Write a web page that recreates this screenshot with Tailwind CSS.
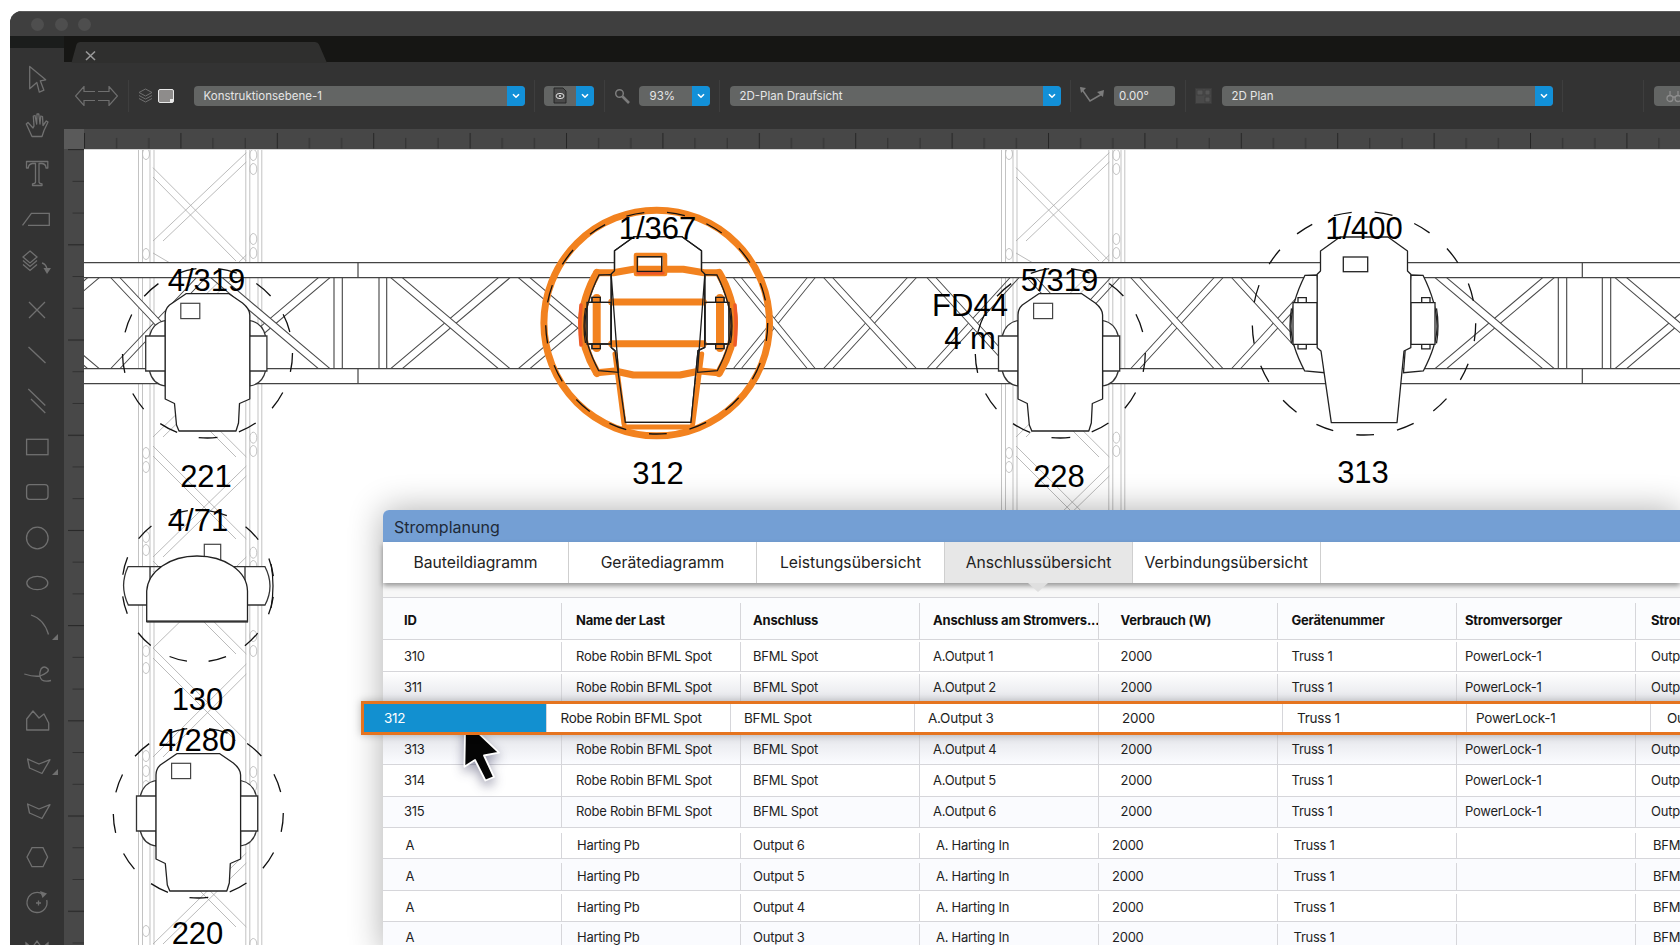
<!DOCTYPE html>
<html lang="de">
<head>
<meta charset="utf-8">
<title>Stromplanung</title>
<script src="https://cdn.jsdelivr.net/npm/@tailwindcss/browser@4"></script>
</head>
<body class="relative w-[1680px] h-[945px] overflow-hidden bg-white font-['Inter','Liberation_Sans',sans-serif]">
<div class="h-full pl-[10px] pt-[11px]">
<div class="h-full flex flex-col overflow-hidden rounded-tl-[12px] bg-[#333333]">

  <!-- title bar -->
  <div class="h-[25px] shrink-0 bg-[#3f3f3f] border-t border-[#5a5a5a] flex items-center pl-[21px] gap-[10.7px]">
    <span class="w-[13px] h-[13px] rounded-full bg-[#4e4e4e]"></span>
    <span class="w-[13px] h-[13px] rounded-full bg-[#4e4e4e]"></span>
    <span class="w-[13px] h-[13px] rounded-full bg-[#4e4e4e]"></span>
  </div>

  <div class="flex-1 min-h-0 flex">
    <!-- tool sidebar -->
    <aside class="w-[54px] shrink-0 flex flex-col bg-[#333333]">
      <div class="h-[12px] shrink-0 bg-[#1b1d1c]"></div>
      <div class="pt-[11px] flex flex-col text-[#707070]">
        <div class="h-[45.6px] flex items-center justify-center"><svg class="w-[30px] h-[30px] overflow-visible -translate-y-[3.5px]" viewBox="0 0 30 30" fill="none" stroke="currentColor" stroke-width="1.3" stroke-linejoin="round"><path d="M7.7 3V25.3L14.8 19L17.3 28.7L21.9 26.7L18.3 17.3L23.7 16.3Z"/></svg></div>
        <div class="h-[45.6px] flex items-center justify-center"><svg class="w-[30px] h-[30px] overflow-visible -translate-y-[2px]" viewBox="0 0 30 30" fill="none" stroke="currentColor" stroke-width="1.3" stroke-linejoin="round"><path d="M10 26.5H20L22 20.5L26 12L24.3 11L21 15.5L20.5 6.5L18.8 6L18 14L16.8 4H15L14.7 14L13 5.5L11.3 6L12 16L11 18L6 12.5L4.3 14L10 26.5Z"/></svg></div>
        <div class="h-[45.6px] flex items-center justify-center"><svg class="w-[30px] h-[30px] overflow-visible" viewBox="0 0 30 30" fill="none" stroke="currentColor" stroke-width="1.3" stroke-linejoin="round"><path d="M4.5 3.5H25.8V10H24Q24 6 20 5.5H17V24Q17 25.5 20 25.8V27.5H10.5V25.8Q13.5 25.5 13.5 24V5.5H10.5Q6.5 6 6.3 10H4.5Z"/></svg></div>
        <div class="h-[45.6px] flex items-center justify-center"><svg class="w-[30px] h-[30px] overflow-visible" viewBox="0 0 30 30" fill="none" stroke="currentColor" stroke-width="1.3"><path d="M0.5 21.4L9.4 9.4H27.3V21.4H6"/></svg></div>
        <div class="h-[45.6px] flex items-center justify-center"><svg class="w-[30px] h-[30px] overflow-visible" viewBox="0 0 30 30" fill="none" stroke="currentColor" stroke-width="1.3"><path d="M8 2L15 8L8 14L1 8ZM1 11.5L8 17.5L15 11.5M1 15.5L8 21.5L15 15.5M20 14Q24 15 25 20"/><path d="M21.5 19H29L25 25Z" fill="currentColor" stroke="none"/></svg></div>
        <div class="h-[45.6px] flex items-center justify-center"><svg class="w-[30px] h-[30px] overflow-visible" viewBox="0 0 30 30" fill="none" stroke="currentColor" stroke-width="1.3"><path d="M7 7L23 23M23 7L7 23"/></svg></div>
        <div class="h-[45.6px] flex items-center justify-center"><svg class="w-[30px] h-[30px] overflow-visible" viewBox="0 0 30 30" fill="none" stroke="currentColor" stroke-width="1.3"><path d="M6.5 7L23.5 23"/></svg></div>
        <div class="h-[45.6px] flex items-center justify-center"><svg class="w-[30px] h-[30px] overflow-visible" viewBox="0 0 30 30" fill="none" stroke="currentColor" stroke-width="1.3"><path d="M6.3 3L23.3 19.5M9 13L23.3 27"/></svg></div>
        <div class="h-[45.6px] flex items-center justify-center"><svg class="w-[30px] h-[30px] overflow-visible" viewBox="0 0 30 30" fill="none" stroke="currentColor" stroke-width="1.3"><rect x="4.6" y="7.3" width="21.4" height="15.4"/></svg></div>
        <div class="h-[45.6px] flex items-center justify-center"><svg class="w-[30px] h-[30px] overflow-visible" viewBox="0 0 30 30" fill="none" stroke="currentColor" stroke-width="1.3"><rect x="4.6" y="7.7" width="21.4" height="14.6" rx="3"/></svg></div>
        <div class="h-[45.6px] flex items-center justify-center"><svg class="w-[30px] h-[30px] overflow-visible" viewBox="0 0 30 30" fill="none" stroke="currentColor" stroke-width="1.3"><circle cx="15.3" cy="15" r="10.8"/></svg></div>
        <div class="h-[45.6px] flex items-center justify-center"><svg class="w-[30px] h-[30px] overflow-visible" viewBox="0 0 30 30" fill="none" stroke="currentColor" stroke-width="1.3"><ellipse cx="15.3" cy="15" rx="10.5" ry="6.7"/></svg></div>
        <div class="h-[45.6px] flex items-center justify-center"><svg class="w-[30px] h-[30px] overflow-visible" viewBox="0 0 30 30" fill="none" stroke="currentColor" stroke-width="1.3"><path d="M9 1Q22 5 26.5 20.5"/><path d="M36 20V26H30Z" fill="currentColor" stroke="none"/></svg></div>
        <div class="h-[45.6px] flex items-center justify-center"><svg class="w-[30px] h-[30px] overflow-visible" viewBox="0 0 30 30" fill="none" stroke="currentColor" stroke-width="1.3"><path d="M2.3 14Q12 17 18 16Q28 12 26 9Q22 5 19 9Q16 16 20 20Q23 22 29 20.5"/></svg></div>
        <div class="h-[45.6px] flex items-center justify-center"><svg class="w-[30px] h-[30px] overflow-visible" viewBox="0 0 30 30" fill="none" stroke="currentColor" stroke-width="1.3" stroke-linejoin="round"><path d="M4.7 25V14L11 6L17 13L22 9L26.7 18V25Z"/></svg></div>
        <div class="h-[45.6px] flex items-center justify-center"><svg class="w-[30px] h-[30px] overflow-visible" viewBox="0 0 30 30" fill="none" stroke="currentColor" stroke-width="1.3" stroke-linejoin="round"><path d="M5.6 8L17 13L28 8.7L20 22.5L7.5 17Z"/><path d="M36 18V24H30Z" fill="currentColor" stroke="none"/></svg></div>
        <div class="h-[45.6px] flex items-center justify-center"><svg class="w-[30px] h-[30px] overflow-visible" viewBox="0 0 30 30" fill="none" stroke="currentColor" stroke-width="1.3" stroke-linejoin="round"><path d="M5.6 8L17 13L28 8.7L20 22.5L7.5 17Z"/></svg></div>
        <div class="h-[45.6px] flex items-center justify-center"><svg class="w-[30px] h-[30px] overflow-visible" viewBox="0 0 30 30" fill="none" stroke="currentColor" stroke-width="1.3"><path d="M5 15L10 5.7H21L25.6 15L21 24.7H10Z"/></svg></div>
        <div class="h-[45.6px] flex items-center justify-center"><svg class="w-[30px] h-[30px] overflow-visible" viewBox="0 0 30 30" fill="none" stroke="currentColor" stroke-width="1.3"><path d="M21 7.5A10 10 0 1 0 24.7 13M14 16H19M16.5 13.5V18.5"/><path d="M18 4L25 6.5L20.5 11Z" fill="currentColor" stroke="none"/></svg></div>
        <div class="h-[45.6px] flex items-center justify-center"><svg class="w-[30px] h-[30px] overflow-visible" viewBox="0 0 30 30" fill="none" stroke="currentColor" stroke-width="1.3"><path d="M4 22V10L10 15L15 8L20 15L26 10V22"/></svg></div>
      </div>
    </aside>

    <div class="flex-1 min-w-0 flex flex-col">
      <!-- tab strip -->
      <div class="relative h-[26.3px] shrink-0 bg-[#161614]">
        <svg class="absolute left-0 top-0 w-[300px] h-[27px]" viewBox="64 36 300 27"><path d="M71.4 63L76.5 44.5Q77.3 42 80 42H315Q318 42 319 44.5L327 63Z" fill="#2f2f2e"/><path d="M86 51.5L95 60M95 51.5L86 60" stroke="#9a9a9a" stroke-width="1.6" fill="none"/></svg>
      </div>

      <!-- toolbar -->
      <div class="h-[67px] shrink-0 bg-[#333333] flex items-center text-[11.5px] text-[#e6e6e6]">
        <svg class="ml-[11px] w-[43px] h-[20px] shrink-0" viewBox="0 0 43 20" fill="none" stroke="#6f6f6f" stroke-width="1.2"><path d="M20 5.5H9V.5L.5 10L9 19.5V14.5H20M23 5.5H34V.5L42.5 10L34 19.5V14.5H23"/></svg>
        <span class="ml-[9.5px] w-px h-[32px] bg-[#3e3e3e] shrink-0"></span>
        <svg class="ml-[9px] w-[15px] h-[16px] shrink-0" viewBox="0 0 15 16" fill="none" stroke="#6f6f6f" stroke-width="1"><path d="M7.5 1L14 4.5L7.5 8L1 4.5ZM1 7.5L7.5 11L14 7.5M1 10.5L7.5 14L14 10.5"/></svg>
        <span class="ml-[5.5px] relative w-[15.5px] h-[14.5px] shrink-0 rounded-[2px] bg-[#8e8c8b] border border-[#e8e8e8]"><span class="absolute right-0 bottom-0 w-[3px] h-[3px] bg-[#e8e8e8]"></span></span>
        <div class="ml-[20px] w-[331px] h-[20px] shrink-0 flex rounded-[4px] overflow-hidden bg-[#636564]">
          <span class="flex-1 pl-[10px] leading-[20px]">Konstruktionsebene-1</span>
          <span class="w-[18px] bg-[#1290d8] flex items-center justify-center"><svg class="w-[8px] h-[6px]" viewBox="0 0 8 6" fill="none" stroke="#fff" stroke-width="1.6"><path d="M1 1.2L4 4.2L7 1.2"/></svg></span>
        </div>
        <span class="ml-[9px] w-px h-[32px] bg-[#3e3e3e] shrink-0"></span>
        <div class="ml-[9.5px] w-[50px] h-[20px] shrink-0 flex rounded-[4px] overflow-hidden bg-[#636564]">
          <span class="flex-1 flex items-center justify-center"><svg class="w-[16px] h-[17px]" viewBox="0 0 16 17" fill="none" stroke="#222" stroke-width=".9"><path d="M2 1H11L14 4V16H2Z" fill="#4a4a4a"/><ellipse cx="8" cy="9" rx="4" ry="2.6" stroke="#eee"/><circle cx="8" cy="9" r="1" fill="#eee" stroke="none"/></svg></span>
          <span class="w-[18px] bg-[#1290d8] flex items-center justify-center"><svg class="w-[8px] h-[6px]" viewBox="0 0 8 6" fill="none" stroke="#fff" stroke-width="1.6"><path d="M1 1.2L4 4.2L7 1.2"/></svg></span>
        </div>
        <span class="ml-[10px] w-px h-[32px] bg-[#3e3e3e] shrink-0"></span>
        <svg class="ml-[8.5px] w-[16px] h-[16px] shrink-0" viewBox="0 0 16 16" fill="none" stroke="#7c7c7c"><circle cx="5.5" cy="5.5" r="3.8" stroke-width="1.5"/><path d="M8.5 8.5L15 15" stroke-width="2.6"/></svg>
        <div class="ml-[9px] w-[71px] h-[20px] shrink-0 flex rounded-[4px] overflow-hidden bg-[#636564]">
          <span class="flex-1 pl-[11px] leading-[20px]">93%</span>
          <span class="w-[18px] bg-[#1290d8] flex items-center justify-center"><svg class="w-[8px] h-[6px]" viewBox="0 0 8 6" fill="none" stroke="#fff" stroke-width="1.6"><path d="M1 1.2L4 4.2L7 1.2"/></svg></span>
        </div>
        <span class="ml-[9px] w-px h-[32px] bg-[#3e3e3e] shrink-0"></span>
        <div class="ml-[10px] w-[331px] h-[20px] shrink-0 flex rounded-[4px] overflow-hidden bg-[#636564]">
          <span class="flex-1 pl-[10px] leading-[20px]">2D-Plan Draufsicht</span>
          <span class="w-[18px] bg-[#1290d8] flex items-center justify-center"><svg class="w-[8px] h-[6px]" viewBox="0 0 8 6" fill="none" stroke="#fff" stroke-width="1.6"><path d="M1 1.2L4 4.2L7 1.2"/></svg></span>
        </div>
        <span class="ml-[9.5px] w-px h-[32px] bg-[#3e3e3e] shrink-0"></span>
        <svg class="ml-[9px] w-[24px] h-[17px] shrink-0" viewBox="0 0 24 17" fill="none" stroke="#7c7c7c" stroke-width="1.5"><path d="M1 1L10 14L22 7"/><path d="M0 0L6 1L1 6ZM24 3L23 10L17 5Z" fill="#7c7c7c" stroke="none"/></svg>
        <div class="ml-[10px] w-[61px] h-[20px] shrink-0 rounded-[3px] bg-[#636564] pl-[5px] leading-[20px]">0.00°</div>
        <span class="ml-[9.5px] w-px h-[32px] bg-[#3e3e3e] shrink-0"></span>
        <svg class="ml-[9px] w-[17px] h-[16px] shrink-0" viewBox="0 0 17 16" fill="#4a4a4a" stroke="#3c3c3c" stroke-width=".8"><rect x=".5" y=".5" width="16" height="15"/><rect x="2" y="2" width="6" height="5" fill="#555"/><rect x="10" y="2" width="5" height="5" fill="#555"/><rect x="10" y="9" width="5" height="5" fill="#555"/></svg>
        <div class="ml-[10px] w-[331px] h-[20px] shrink-0 flex rounded-[4px] overflow-hidden bg-[#636564]">
          <span class="flex-1 pl-[10px] leading-[20px]">2D Plan</span>
          <span class="w-[18px] bg-[#1290d8] flex items-center justify-center"><svg class="w-[8px] h-[6px]" viewBox="0 0 8 6" fill="none" stroke="#fff" stroke-width="1.6"><path d="M1 1.2L4 4.2L7 1.2"/></svg></span>
        </div>
        <span class="ml-[9.5px] w-px h-[32px] bg-[#3e3e3e] shrink-0"></span>
        <span class="ml-[80px] w-px h-[32px] bg-[#3e3e3e] shrink-0"></span>
        <div class="ml-[9.5px] w-[60px] h-[20px] shrink-0 rounded-l-[4px] bg-[#636564] pl-[12px] flex items-center"><svg class="w-[16px] h-[14px]" viewBox="0 0 16 14" fill="none" stroke="#8d8d8d" stroke-width="1.3"><circle cx="4" cy="9.5" r="3"/><circle cx="12" cy="9.5" r="3"/><path d="M4 6V2M12 6V2M7 8H9"/></svg></div>
      </div>

      <!-- top ruler -->
      <div class="h-[19.7px] shrink-0 flex bg-[#474747]">
        <div class="w-[20px] shrink-0 bg-[#5a5a5a]"></div>
        <svg class="flex-1 h-full" viewBox="84 0 1596 20" preserveAspectRatio="none">
          <defs><pattern id="rt" patternUnits="userSpaceOnUse" x="180.4" y="0" width="96.4" height="20"><path d="M.5 4V20" stroke="#262626" stroke-width="1.1"/><path d="M32.6 9V20M64.8 9V20" stroke="#2c2c2c" stroke-width=".9"/></pattern></defs>
          <rect x="84" y="0" width="1596" height="20" fill="url(#rt)"/>
        </svg>
      </div>

      <div class="flex-1 min-h-0 flex">
        <!-- left ruler -->
        <svg class="w-[20px] h-full shrink-0 bg-[#484848]" viewBox="0 149 20 796" preserveAspectRatio="none">
          <defs><pattern id="rl" patternUnits="userSpaceOnUse" x="0" y="244.3" width="20" height="95.2"><path d="M4 .5H20" stroke="#262626" stroke-width="1.2"/><path d="M8.5 32.2H20M8.5 64H20" stroke="#2c2c2c" stroke-width=".9"/></pattern></defs>
          <rect x="0" y="149" width="20" height="796" fill="url(#rl)"/>
        </svg>

        <!-- drawing canvas -->
        <div class="relative flex-1 min-w-0 bg-white overflow-hidden border-t border-[#d4d4d4]">
          <svg class="block w-[1596px] h-[796px]" viewBox="84 149 1596 796" fill="none" font-family="'Liberation Sans',Arial,sans-serif">
            <defs>
              <g id="vt">
                <path d="M138.5 149V945M142.5 149V945M150 149V945M154 149V945M245.8 149V945M249.8 149V945M258 149V945M261.8 149V945" stroke="#bcbcbc" stroke-width=".9"/>
                <path stroke="#aaaaaa" stroke-width=".8" d="M153 166.7L246.3 260M153 176L236 260M153 252L170 262M153 363L246.3 456M153 373L236 456M153 445L246.3 538M153 455L236 538M153 560L246.3 653M153 570L236 653M153 647L246.3 740M153 657L236 740M153 833L246.3 926M153 843L236 926M153 240L246.3 151.7M163 240L246.3 161M153 345L246.3 254M163 345L246.3 264M153 436L246.3 345M163 436L246.3 355M153 556L246.3 465M163 556L246.3 475M153 647L246.3 556M153 756L246.3 663M163 756L246.3 673M153 943L246.3 852M163 943L246.3 862"/>
                <g stroke="#bcbcbc" stroke-width=".9"><ellipse cx="146" cy="153" rx="3.5" ry="5.5"/><ellipse cx="146" cy="253" rx="3.5" ry="5.5"/><ellipse cx="146" cy="452" rx="3.5" ry="5.5"/><ellipse cx="146" cy="466" rx="3.5" ry="5.5"/><ellipse cx="146" cy="536" rx="3.5" ry="5.5"/><ellipse cx="146" cy="549" rx="3.5" ry="5.5"/><ellipse cx="146" cy="650" rx="3.5" ry="5.5"/><ellipse cx="146" cy="667" rx="3.5" ry="5.5"/><ellipse cx="146" cy="755" rx="3.5" ry="5.5"/><ellipse cx="146" cy="770" rx="3.5" ry="5.5"/><ellipse cx="146" cy="785" rx="3.5" ry="5.5"/><ellipse cx="146" cy="930" rx="3.5" ry="5.5"/><ellipse cx="253.3" cy="154" rx="3.5" ry="5.5"/><ellipse cx="253.3" cy="168" rx="3.5" ry="5.5"/><ellipse cx="253.3" cy="238" rx="3.5" ry="5.5"/><ellipse cx="253.3" cy="252" rx="3.5" ry="5.5"/><ellipse cx="253.3" cy="436.7" rx="3.5" ry="5.5"/><ellipse cx="253.3" cy="450" rx="3.5" ry="5.5"/><ellipse cx="253.3" cy="551.7" rx="3.5" ry="5.5"/><ellipse cx="253.3" cy="565" rx="3.5" ry="5.5"/><ellipse cx="253.3" cy="635" rx="3.5" ry="5.5"/><ellipse cx="253.3" cy="650" rx="3.5" ry="5.5"/><ellipse cx="253.3" cy="771" rx="3.5" ry="5.5"/><ellipse cx="253.3" cy="785" rx="3.5" ry="5.5"/><ellipse cx="253.3" cy="943" rx="3.5" ry="5.5"/></g>
              </g>
              <g id="tx">
                <path d="M0 367.7L107.7 276.7M11.6 367.7L119.3 276.7" stroke="#4a4a4a" stroke-width="1.1"/>
                <path d="M0 276.7H11.6L119.3 367.7H107.7Z" fill="#fff"/>
                <path d="M0 276.7L107.7 367.7M11.6 276.7L119.3 367.7" stroke="#4a4a4a" stroke-width="1.1"/>
              </g>
              <g id="devA">
                <circle r="85" stroke="#111" stroke-width="1.3" stroke-dasharray="19 22.08" fill="none"/>
                <path d="M-42.3 -32.5Q-55 -30 -58 -17V18Q-55 31 -42.3 33ZM42.3 -32.5Q55 -30 58 -17V18Q55 31 42.3 33Z" fill="#fff" stroke="#333" stroke-width="1.2"/>
                <path d="M-61.8 -17H-42V18H-61.8ZM42 -17H59.4V18H42Z" fill="#fff" stroke="#333" stroke-width="1.3"/>
                <path d="M-21.5 -59.3H21.5L35 -50Q42.3 -44 42.3 -38V46L32 50.5L31 70L28.5 78H-28.5L-31 72L-33 50.5L-42.3 46V-38Q-42.3 -44 -38 -48Z" fill="#fff" stroke="#222" stroke-width="1.3" stroke-linejoin="round"/>
                <rect x="-26.7" y="-49.7" width="19" height="15.3" fill="#fff" stroke="#444" stroke-width="1.2"/>
              </g>
              <g id="yokeB">
                <path d="M46.8 -48.3L59 -48C68 -30 73 -12 73 3C73 20 66 35 59.3 47.7L39.5 49.4Z"/>
                <path d="M57.7 -25.6H66V-20.6H57.7ZM57.7 21H66V25.6H57.7Z"/>
                <path d="M46.8 -20.6H71V21H46.8Z"/>
                <path d="M72.5 -15Q75.5 3 72.5 20" fill="none"/>
              </g>
              <g id="bodyB">
                <use href="#yokeB"/>
                <use href="#yokeB" transform="scale(-1 1)"/>
                <path d="M-24 -86.3H24L43.5 -72.3V-52.3L46.8 -49V24.4L40 27.7L33 99.4H-32.7L-43 27.7L-46.8 24.4V-49L-43.5 -52.3V-72.3Z" stroke-linejoin="round"/>
                <rect x="-20.7" y="-66.3" width="24.4" height="14.7"/>
              </g>
            </defs>

            <!-- vertical trusses -->
            <use href="#vt"/>
            <use href="#vt" transform="translate(863 0)"/>

            <!-- horizontal truss -->
            <rect x="84" y="261.7" width="1596" height="15" fill="#fff"/>
            <rect x="84" y="367.7" width="1596" height="15" fill="#fff"/>
            <use href="#tx" transform="translate(-20 0)"/>
            <use href="#tx" transform="translate(110.7 0) scale(.796 1)"/>
            <use href="#tx" transform="translate(210.7 0)"/>
            <use href="#tx" transform="translate(390.7 0)"/>
            <use href="#tx" transform="translate(518.3 0)"/>
            <use href="#tx" transform="translate(645 0) scale(.67 1)"/>
            <use href="#tx" transform="translate(733.3 0) scale(.687 1)"/>
            <use href="#tx" transform="translate(823.6 0) scale(.778 1)"/>
            <use href="#tx" transform="translate(927 0) scale(.771 1)"/>
            <use href="#tx" transform="translate(1027 0) scale(.777 1)"/>
            <use href="#tx" transform="translate(1130.7 0) scale(.774 1)"/>
            <use href="#tx" transform="translate(1231.6 0) scale(.774 1)"/>
            <use href="#tx" transform="translate(1435 0)"/>
            <use href="#tx" transform="translate(1615 0)"/>
            <path d="M84 261.7H1680M84 276.7H1680M84 367.7H1680M84 382.7H1680" stroke="#444" stroke-width="1.3"/>
            <path d="M358 261.7V276.7M358 367.7V382.7M1582.3 261.7V276.7M1582.3 367.7V382.7" stroke="#444" stroke-width="1.2"/>
            <path d="M334 276.7V367.7M342.3 276.7V367.7M379 276.7V367.7M386.7 276.7V367.7M1558.3 276.7V367.7M1566.7 276.7V367.7M1602.3 276.7V367.7M1610.7 276.7V367.7" stroke="#444" stroke-width="1.1"/>

            <!-- lighting devices -->
            <use href="#devA" transform="translate(207.5 352)"/>
            <use href="#devA" transform="translate(1060.3 352)"/>
            <use href="#devA" transform="translate(198.3 812)"/>

            <!-- 130 device -->
            <circle cx="198" cy="585" r="76" stroke="#111" stroke-width="1.3" stroke-dasharray="18 21.8" stroke-dashoffset="-10.9"/>
            <rect x="204.3" y="543.3" width="16.4" height="16" fill="#fff" stroke="#444" stroke-width="1.2"/>
            <path d="M165 565.7H128Q119 585 128.3 604H150V565.7ZM230 565.7H265Q275 585 265 604H245V565.7Z" fill="#fff" stroke="#333" stroke-width="1.3"/>
            <path d="M146.7 620.5V590C148 570 170 555 197 555C225 555 247 570 247.5 590V620.5Z" fill="#fff" stroke="#222" stroke-width="1.3"/>
            <path d="M146.7 620.5H248" stroke="#333" stroke-width="2"/>
            <path d="M271 563Q275 585 271 607" stroke="#111" stroke-width="1.2"/>

            <!-- 313 device -->
            <circle cx="1364" cy="322.3" r="111.7" stroke="#111" stroke-width="1.3" stroke-dasharray="18 23.28"/>
            <g transform="translate(1364 322.3)" fill="#fff" stroke="#222" stroke-width="1.3"><use href="#bodyB"/></g>

            <!-- 312 selected device -->
            <g transform="translate(658 322)">
              <g fill="#fff" stroke="#222" stroke-width="1.3"><use href="#bodyB"/></g>
              <g fill="none" stroke="#f2821f" stroke-linecap="round" stroke-linejoin="round">
                <circle cx="-1.3" cy="0" r="112.8" stroke-width="7"/>
                <path stroke-width="7" d="M-61.3 -50.3H-44.7L-24.7 -53.7H25.3L46 -50.3H60.3M-61.3 49.7L-43 48L-24.7 52H22L42 48L60.3 49.7M-46.3 -21H45.3M-46.3 20.7H45.3"/>
                <path stroke-width="8" d="M-61 -50C-70 -35 -76 -15 -76 0C-76 18 -70 35 -61 50M61 -50C70 -35 76 -15 76 0C76 18 70 35 61 50"/>
                <path stroke-width="8" d="M-61.3 -25V25M62 -25V25"/>
                <rect x="-22" y="-68" width="29" height="19" stroke-width="4.5"/>
                <path stroke-width="5" d="M-43 31L-34 101M43.7 31L34.7 101M-34 104H34.7"/>
                <path stroke-width="3.5" stroke="#ee5a27" d="M-77 -18Q-79 2 -77 22M77 -18Q79 2 77 22M-20 -50H5"/>
              </g>
              <g fill="none" stroke="#1c1c1c" stroke-width="1.3"><use href="#bodyB"/></g>
              <circle cx="-1.3" cy="0" r="111" stroke="#111" stroke-width="1.3" stroke-dasharray="18 23"/>
            </g>

            <!-- labels -->
            <g fill="#000" font-size="31" text-anchor="middle">
              <text x="206.5" y="289.5">4/319</text>
              <text x="206" y="485.5">221</text>
              <text x="198" y="530">4/71</text>
              <text x="197.5" y="708.5">130</text>
              <text x="197.5" y="749.5">4/280</text>
              <text x="197.5" y="943">220</text>
              <text x="657.5" y="238">1/367</text>
              <text x="658" y="483">312</text>
              <text x="970" y="314.5">FD44</text>
              <text x="970" y="348">4 m</text>
              <text x="1059.5" y="290">5/319</text>
              <text x="1059" y="485.5">228</text>
              <text x="1364" y="237.5">1/400</text>
              <text x="1363" y="482">313</text>
            </g>
          </svg>

          <!-- Stromplanung dialog -->
          <div class="absolute left-[299px] top-[360px] w-[1297px] rounded-tl-[6px] bg-white shadow-[0_0_34px_rgba(0,0,0,0.32)] text-[#1e1e1e]">
            <div class="h-[32px] rounded-tl-[6px] bg-[#749fd4] pl-[11px] pt-[2px] flex items-center text-[16px] text-[#1f2a38]">Stromplanung</div>
            <div class="relative z-10 h-[41px] flex bg-white shadow-[0_3px_5px_rgba(0,0,0,0.38)] text-[15.7px] text-[#222]">
              <div class="w-[186px] border-r border-[#cfcfcf] flex items-center justify-center">Bauteildiagramm</div>
              <div class="w-[188px] border-r border-[#cfcfcf] flex items-center justify-center">Gerätediagramm</div>
              <div class="w-[188px] border-r border-[#cfcfcf] flex items-center justify-center">Leistungsübersicht</div>
              <div class="relative w-[188px] border-r border-[#cfcfcf] bg-[#e7e7e7] flex items-center justify-center">Anschlussübersicht<span class="absolute left-[83px] top-[41px] w-0 h-0 border-x-[10px] border-x-transparent border-t-[9px] border-t-[#dfdfdf]"></span></div>
              <div class="w-[187.5px] border-r border-[#cfcfcf] flex items-center justify-center">Verbindungsübersicht</div>
            </div>
            <div class="h-[13.7px] bg-[#f7f7f7]"></div>

            <div class="text-[13px] tracking-[-0.25px] [&>div]:grid [&>div]:grid-cols-[179px_repeat(7,179px)] [&>div]:border-b [&>div]:border-[#d6d6da] [&>div>div]:flex [&>div>div]:items-center [&>div>div]:border-r [&>div>div]:border-[#d6d6da] [&>div>div]:whitespace-nowrap [&>div>div]:overflow-hidden">
              <div class="h-[43.6px] pt-[5px] bg-[#fbfcfe] border-t border-t-[#dcdcdc] font-bold tracking-[-0.2px] text-[#111]">
                <div class="pl-[21px]">ID</div><div class="pl-[14px]">Name der Last</div><div class="pl-[12px]">Anschluss</div><div class="pl-[13px]">Anschluss am Stromvers...</div><div class="pl-[21.5px]">Verbrauch (W)</div><div class="pl-[13.5px]">Gerätenummer</div><div class="pl-[8px]">Stromversorger</div><div class="pl-[15px]">Stromversorger</div>
              </div>
              <div class="h-[31.3px] pt-[2px] bg-white">
                <div class="pl-[21px]">310</div><div class="pl-[14px]">Robe Robin BFML Spot</div><div class="pl-[12px]">BFML Spot</div><div class="pl-[13px]">A.Output 1</div><div class="pl-[21.5px]">2000</div><div class="pl-[13.5px]">Truss 1</div><div class="pl-[8px]">PowerLock-1</div><div class="pl-[15px]">Output 1</div>
              </div>
              <div class="h-[31.3px] pt-[2px] bg-gradient-to-b from-white to-[#e4e5ea]">
                <div class="pl-[21px]">311</div><div class="pl-[14px]">Robe Robin BFML Spot</div><div class="pl-[12px]">BFML Spot</div><div class="pl-[13px]">A.Output 2</div><div class="pl-[21.5px]">2000</div><div class="pl-[13.5px]">Truss 1</div><div class="pl-[8px]">PowerLock-1</div><div class="pl-[15px]">Output 2</div>
              </div>
              <div class="relative z-20 h-[31.3px]">
                <div class="absolute! left-[-22px] top-[-2px] w-[1340px] h-[34.5px] grid! items-stretch! grid-cols-[183px_repeat(7,184px)] border-[3px]! border-[#e5741f]! bg-white shadow-[0_0_8px_rgba(0,0,0,0.25)] text-[13.5px] [&>span]:flex [&>span]:items-center [&>span]:border-r [&>span]:border-[#d6d6da]">
                  <span class="bg-[#1290d0] text-white pl-[20px]">312</span><span class="pl-[13.5px]">Robe Robin BFML Spot</span><span class="pl-[13px]">BFML Spot</span><span class="pl-[13px]">A.Output 3</span><span class="pl-[23px]">2000</span><span class="pl-[14px]">Truss 1</span><span class="pl-[9px]">PowerLock-1</span><span class="pl-[16px]">Output 3</span>
                </div>
              </div>
              <div class="h-[31.3px] bg-gradient-to-b from-[#e4e5ea] to-[#fbfcff]">
                <div class="pl-[21px]">313</div><div class="pl-[14px]">Robe Robin BFML Spot</div><div class="pl-[12px]">BFML Spot</div><div class="pl-[13px]">A.Output 4</div><div class="pl-[21.5px]">2000</div><div class="pl-[13.5px]">Truss 1</div><div class="pl-[8px]">PowerLock-1</div><div class="pl-[15px]">Output 4</div>
              </div>
              <div class="h-[31.3px] bg-white">
                <div class="pl-[21px]">314</div><div class="pl-[14px]">Robe Robin BFML Spot</div><div class="pl-[12px]">BFML Spot</div><div class="pl-[13px]">A.Output 5</div><div class="pl-[21.5px]">2000</div><div class="pl-[13.5px]">Truss 1</div><div class="pl-[8px]">PowerLock-1</div><div class="pl-[15px]">Output 5</div>
              </div>
              <div class="h-[31.3px] bg-[#fafbfe]">
                <div class="pl-[21px]">315</div><div class="pl-[14px]">Robe Robin BFML Spot</div><div class="pl-[12px]">BFML Spot</div><div class="pl-[13px]">A.Output 6</div><div class="pl-[21.5px]">2000</div><div class="pl-[13.5px]">Truss 1</div><div class="pl-[8px]">PowerLock-1</div><div class="pl-[15px]">Output 6</div>
              </div>
              <div class="h-[31.3px] pt-[5px] bg-white">
                <div class="pl-[22.5px]">A</div><div class="pl-[15px]">Harting Pb</div><div class="pl-[12px]">Output 6</div><div class="pl-[16px]">A. Harting In</div><div class="pl-[13px]">2000</div><div class="pl-[15.5px]">Truss 1</div><div></div><div class="pl-[17px]">BFML Spot</div>
              </div>
              <div class="h-[31.3px] pt-[4px] bg-[#fafbfe]">
                <div class="pl-[22.5px]">A</div><div class="pl-[15px]">Harting Pb</div><div class="pl-[12px]">Output 5</div><div class="pl-[16px]">A. Harting In</div><div class="pl-[13px]">2000</div><div class="pl-[15.5px]">Truss 1</div><div></div><div class="pl-[17px]">BFML Spot</div>
              </div>
              <div class="h-[31.3px] pt-[3px] bg-white">
                <div class="pl-[22.5px]">A</div><div class="pl-[15px]">Harting Pb</div><div class="pl-[12px]">Output 4</div><div class="pl-[16px]">A. Harting In</div><div class="pl-[13px]">2000</div><div class="pl-[15.5px]">Truss 1</div><div></div><div class="pl-[17px]">BFML Spot</div>
              </div>
              <div class="h-[31.3px] pt-[2px] bg-[#fafbfe]">
                <div class="pl-[22.5px]">A</div><div class="pl-[15px]">Harting Pb</div><div class="pl-[12px]">Output 3</div><div class="pl-[16px]">A. Harting In</div><div class="pl-[13px]">2000</div><div class="pl-[15.5px]">Truss 1</div><div></div><div class="pl-[17px]">BFML Spot</div>
              </div>
            </div>
          </div>
        </div>
      </div>
    </div>
  </div>
</div>
</div>

<!-- mouse pointer -->
<svg class="absolute left-[450px] top-[708px] w-[70px] h-[90px] drop-shadow-[0_5px_6px_rgba(30,30,70,0.45)]" viewBox="450 708 70 90"><path d="M465.2 720.7L499 752.7L484 755.5L494 777L485.4 780.5L475 760L464.4 766.7Z" fill="#050505" stroke="#fff" stroke-width="1.8" stroke-linejoin="round"/></svg>
</body>
</html>
